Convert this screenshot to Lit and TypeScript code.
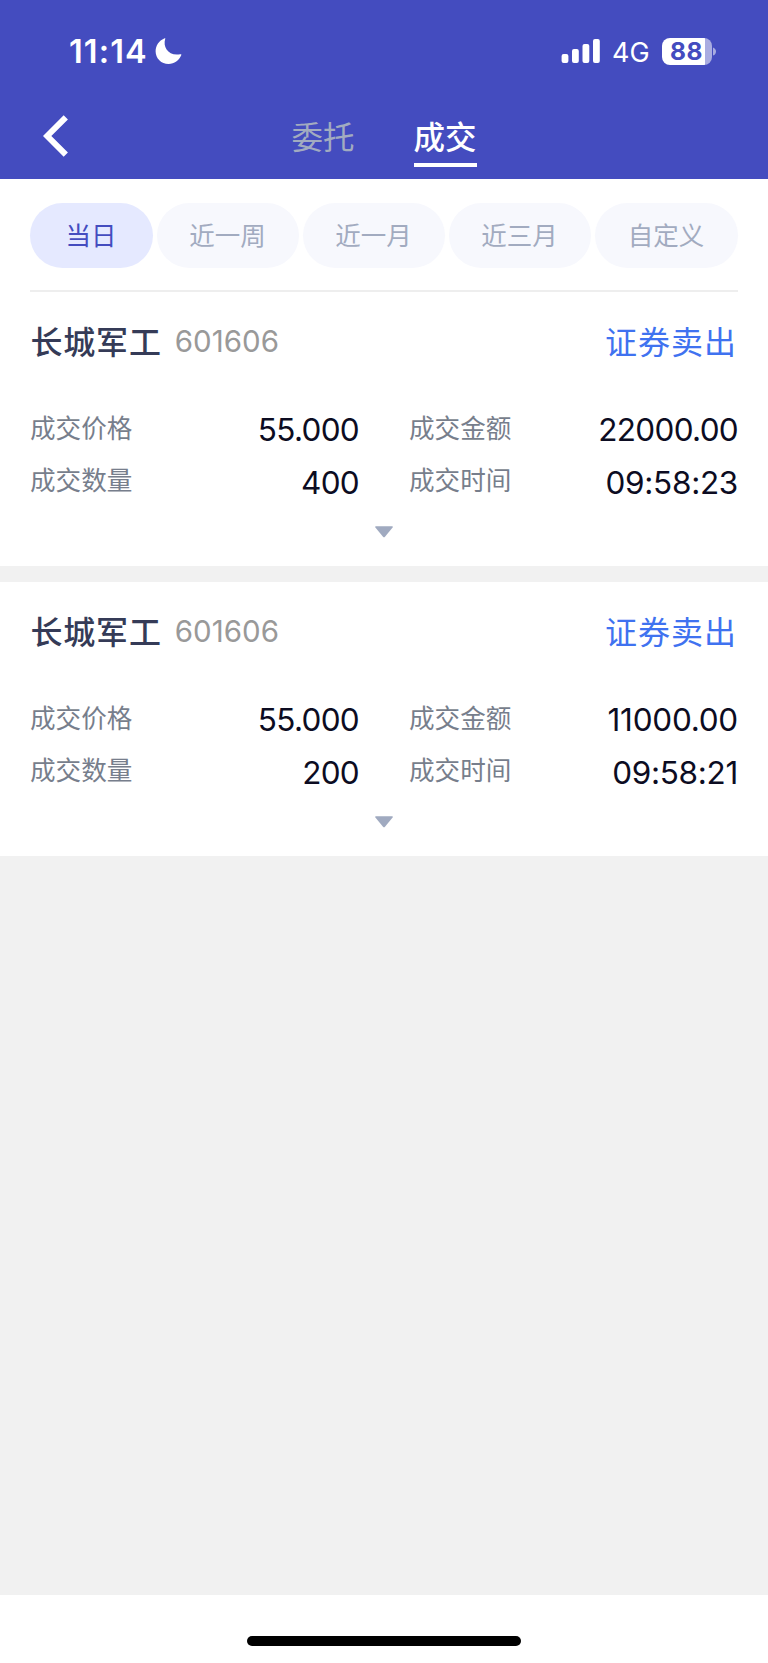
import { LitElement, html, css, svg } from "lit";
import { customElement, property, state } from "lit/decorators.js";
import { classMap } from "lit/directives/class-map.js";

interface Trade {
  name: string;
  code: string;
  action: string;
  price: string;
  amount: string;
  quantity: string;
  time: string;
}

const TRADES: Trade[] = [
  { name: "长城军工", code: "601606", action: "证券卖出", price: "55.000", amount: "22000.00", quantity: "400", time: "09:58:23" },
  { name: "长城军工", code: "601606", action: "证券卖出", price: "55.000", amount: "11000.00", quantity: "200", time: "09:58:21" },
];

@customElement("status-bar")
class StatusBar extends LitElement {
  static styles = css`
    :host { display: flex; align-items: center; justify-content: space-between; height: 103px; padding: 0 51px 0 69px; box-sizing: border-box; color: #fff; }
    .left, .right { display: flex; align-items: center; }
    .clock { font-size: 32.5px; font-weight: 600; line-height: 40px; letter-spacing: 1.1px; width: 86px; white-space: nowrap; padding-top: 1px; }
    .net { font-size: 27px; line-height: 30px; width: 50px; margin-left: 12px; padding-top: 2px; }
    svg { display: block; }
    .battery { display: grid; grid-template-columns: 50px 5px; align-items: center; }
    .cell { height: 27px; border-radius: 8px; background: linear-gradient(90deg, #fff 43px, #a9ace1 43px); color: #444cbf; font-size: 24.5px; font-weight: 700; line-height: 27px; letter-spacing: 0.6px; padding-left: 8px; box-sizing: border-box; }
  `;
  render() {
    return html`
      <div class="left">
        <span class="clock">11:14</span>
        <svg width="27" height="27" viewBox="0 0 27 27"><path fill="#fff" d="M10.3 .5C7.4 9.5 13.8 18.3 25.2 16.2C26.2 16 26.6 16.5 26.2 17.3C24.2 22.5 19.3 26 13.6 26C6.3 26 .6 20.4 .6 13.2C.6 7.5 4.1 2.5 9.2 .4C10 .1 10.5 0 10.3 .5Z"/></svg>
      </div>
      <div class="right">
        <svg width="39" height="25" viewBox="0 0 39 25" fill="#fff">
          ${[[0.6, 9], [11, 14], [21.5, 19], [32, 24]].map(([x, h]) => svg`<rect x=${x} y=${24 - h} width="6.8" height=${h} rx="2"/>`)}
        </svg>
        <span class="net">4G</span>
        <div class="battery">
          <div class="cell">88</div>
          <svg width="5" height="9" viewBox="0 0 5 9"><path fill="#a9ace1" d="M1 .4Q4 1.6 4 4.5T1 8.6Z"/></svg>
        </div>
      </div>`;
  }
}

@customElement("trade-card")
class TradeCard extends LitElement {
  @property({ attribute: false }) trade!: Trade;

  static styles = css`
    :host { display: block; height: 274px; padding: 20px 30px 0; box-sizing: border-box; background: #fff; }
    .head { display: flex; align-items: center; height: 60px; }
    .name { font-size: 32px; font-weight: 500; letter-spacing: 0.8px; color: #353b57; margin-left: 0.5px; padding-top: 2px; }
    .code { font-size: 29.5px; color: #999; font-weight: 400; margin-left: 13px; letter-spacing: 0.05px; padding-bottom: 1px; }
    .action { font-size: 32px; letter-spacing: 1px; color: #3f72f0; margin-left: auto; padding: 2px 1px 0 0; }
    .fields { display: grid; grid-template-columns: 1fr 1fr; column-gap: 50px; grid-auto-rows: 52.5px; margin-top: 32px; }
    .field { display: flex; justify-content: space-between; align-items: center; }
    .label { font-size: 25.6px; color: #777e8c; padding-bottom: 3px; }
    .value { font-size: 31.5px; color: #0c0c22; letter-spacing: -0.7px; padding-bottom: 1px; }
    .value.clock { letter-spacing: -0.3px; }
    .value.narrow { letter-spacing: -0.25px; }
    .more { display: block; margin: 17px auto 0; }
  `;
  private field(label: string, value: string) {
    const classes = { value: true, clock: value.includes(":"), narrow: value.startsWith("11") };
    return html`<div class="field"><span class="label">${label}</span><span class=${classMap(classes)}>${value}</span></div>`;
  }
  render() {
    const t = this.trade;
    return html`
      <div class="head">
        <span class="name">${t.name}</span><span class="code">${t.code}</span><span class="action">${t.action}</span>
      </div>
      <div class="fields">
        ${this.field("成交价格", t.price)}${this.field("成交金额", t.amount)}
        ${this.field("成交数量", t.quantity)}${this.field("成交时间", t.time)}
      </div>
      <svg class="more" width="18" height="12" viewBox="0 0 18 12"><path fill="#a0aac0" d="M.8 .3H17.2Q18.2 .4 17.6 1.4L10 10.8Q9 11.8 8 10.8L.4 1.4Q-.2 .4 .8 .3Z"/></svg>`;
  }
}

@customElement("app-root")
class AppRoot extends LitElement {
  @state() private range = 0;
  private ranges = ["当日", "近一周", "近一月", "近三月", "自定义"];

  static styles = css`
    :host { display: flex; flex-direction: column; width: 768px; height: 1663px; background: #f1f1f1; font-family: Inter, "Noto Sans CJK SC", sans-serif; line-height: 1.25; overflow: hidden; }
    .top { background: #444cbf; height: 179px; flex: none; }
    .nav { display: grid; grid-template-columns: 1fr 63px 59px 63px 1fr; height: 76px; }
    .back { margin: 12px 0 0 43px; }
    .tab { font-size: 31.5px; line-height: 44px; height: 64px; box-sizing: border-box; padding-top: 13px; color: #a2abc0; white-space: nowrap; }
    .tab.on { color: #fff; font-weight: 500; border-bottom: 4px solid #fff; }
    .gap { display: block; }
    .filters { flex: none; background: #fff; padding: 24px 30px 0; }
    .pills { display: grid; grid-template-columns: 123px 142px 142px 142px 143px; column-gap: 4px; padding-bottom: 22px; border-bottom: 2px solid #eee; }
    .pill { border: 0; padding: 0 1px 0 0; height: 65px; border-radius: 32.5px; background: #f7f8fd; color: #a2abc0; font: inherit; font-size: 25.5px; line-height: 65px; text-align: center; }
    .pill.on { background: #e5e9ff; color: #444cbf; }
    .list { flex: 1; display: flex; flex-direction: column; gap: 16px; }
    .home { flex: none; height: 68px; background: #fff; padding-top: 41px; box-sizing: border-box; }
    .bar { width: 274px; height: 10px; border-radius: 5px; background: #000; margin: 0 auto; }
  `;
  render() {
    return html`
      <div class="top">
        <status-bar></status-bar>
        <div class="nav">
          <svg class="back" width="26" height="42" viewBox="0 0 26 42"><path d="M22.8 2.4L4.2 21L22.8 39.6" fill="none" stroke="#fff" stroke-width="6"/></svg>
          <span class="tab">委托</span><span class="gap"></span><span class="tab on">成交</span>
        </div>
      </div>
      <div class="filters">
        <div class="pills">
          ${this.ranges.map((r, i) => html`<button class=${classMap({ pill: true, on: i === this.range })} @click=${() => (this.range = i)}>${r}</button>`)}
        </div>
      </div>
      <div class="list">${TRADES.map((t) => html`<trade-card .trade=${t}></trade-card>`)}</div>
      <div class="home"><div class="bar"></div></div>`;
  }
}
